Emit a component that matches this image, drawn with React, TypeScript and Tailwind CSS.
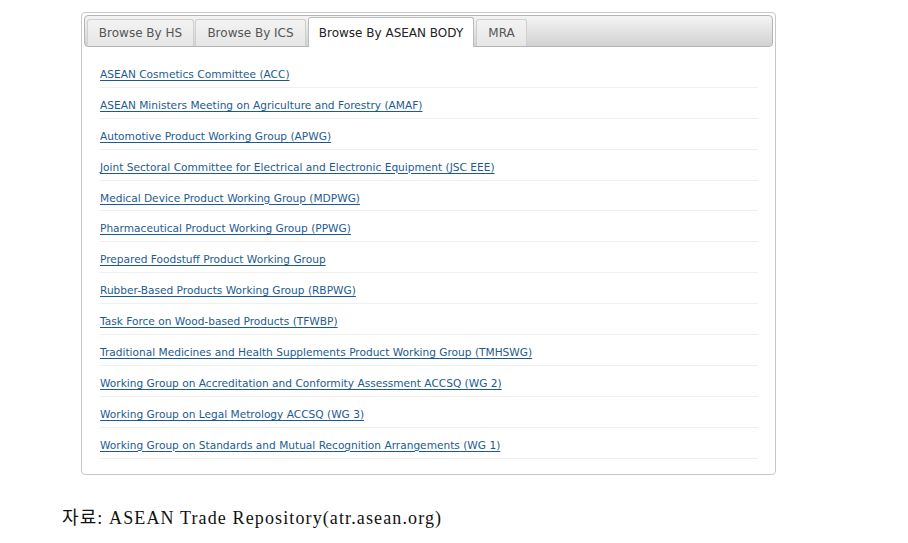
import React from "react";

const links = [
  "ASEAN Cosmetics Committee (ACC)",
  "ASEAN Ministers Meeting on Agriculture and Forestry (AMAF)",
  "Automotive Product Working Group (APWG)",
  "Joint Sectoral Committee for Electrical and Electronic Equipment (JSC EEE)",
  "Medical Device Product Working Group (MDPWG)",
  "Pharmaceutical Product Working Group (PPWG)",
  "Prepared Foodstuff Product Working Group",
  "Rubber-Based Products Working Group (RBPWG)",
  "Task Force on Wood-based Products (TFWBP)",
  "Traditional Medicines and Health Supplements Product Working Group (TMHSWG)",
  "Working Group on Accreditation and Conformity Assessment ACCSQ (WG 2)",
  "Working Group on Legal Metrology ACCSQ (WG 3)",
  "Working Group on Standards and Mutual Recognition Arrangements (WG 1)",
];

const tabs = [
  { label: "Browse By HS", w: "w-[107px]" },
  { label: "Browse By ICS", w: "w-[111px]" },
  { label: "Browse By ASEAN BODY", w: "w-[166px]", active: true },
  { label: "MRA", w: "w-[51px]" },
];

export default function App() {
  return (
    <div className="w-[908px] h-[543px] bg-white relative" style={{ fontFamily: "'DejaVu Sans', Verdana, sans-serif" }}>
      <div className="pt-[12px] pl-[81px]">
        <div className="w-[695px] h-[463px] border border-[#c8c8c8] rounded-[4px] p-[2px] bg-white">
          <div className="h-[32px] rounded-[4px] border border-[#b5b5b5] bg-gradient-to-b from-[#f4f4f4] to-[#d2d2d2] flex items-end pl-[2px] gap-[1px]">
            {tabs.map((t) =>
              t.active ? (
                <div
                  key={t.label}
                  className={`${t.w} h-[30px] -mb-[1px] ml-[1px] mr-[1px] bg-white border border-b-0 border-[#bdbdbd] rounded-t-[3px] flex items-center justify-center text-[12px] text-[#222]`}
                >
                  {t.label}
                </div>
              ) : (
                <div
                  key={t.label}
                  className={`${t.w} h-[27px] bg-gradient-to-b from-[#f3f3f3] to-[#e6e6e6] border border-b-0 border-[#cfcfcf] rounded-t-[3px] flex items-center justify-center text-[12px] text-[#555]`}
                >
                  {t.label}
                </div>
              )
            )}
          </div>
          <div className="pl-[16px] pr-[15px] pt-[10px]">
            {links.map((l) => (
              <div key={l} className="h-[30.9px] border-b border-[#efefef] flex items-start pt-[10px]">
                <a className="text-[10.6px] leading-[14px] text-[#1d5b8f] underline underline-offset-[2px]" href="#">
                  {l}
                </a>
              </div>
            ))}
          </div>
        </div>
      </div>
      <div
        className="absolute left-[62px] top-[505px] text-[18px] tracking-[1.12px] text-[#111]"
        style={{ fontFamily: "'Liberation Serif', 'Noto Sans CJK KR', serif" }}
      >
        자료: ASEAN Trade Repository(atr.asean.org)
      </div>
    </div>
  );
}
